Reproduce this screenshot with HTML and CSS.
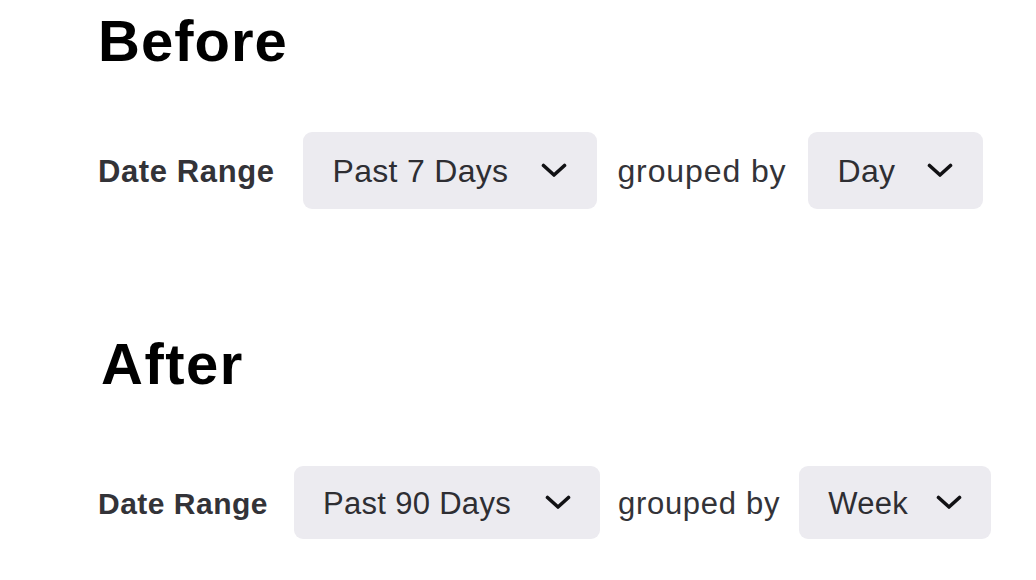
FILE: index.html
```html
<!DOCTYPE html>
<html lang="en">
<head>
<meta charset="utf-8">
<title>Before / After</title>
<link rel="stylesheet" href="styles.css">
</head>
<body>
<main class="page">
  <section class="block before">
    <h1 class="title">Before</h1>
    <div class="filters">
      <span class="label">Date Range</span>
      <button class="select select-range">
        <span class="value">Past 7 Days</span>
        <svg class="chev" viewBox="0 0 26 15" aria-hidden="true"><path d="M2.5 2.5 L13 12 L23.5 2.5" fill="none" stroke="currentColor" stroke-width="3.6" stroke-linecap="round" stroke-linejoin="round"/></svg>
      </button>
      <span class="plain">grouped by</span>
      <button class="select select-group">
        <span class="value">Day</span>
        <svg class="chev" viewBox="0 0 26 15" aria-hidden="true"><path d="M2.5 2.5 L13 12 L23.5 2.5" fill="none" stroke="currentColor" stroke-width="3.6" stroke-linecap="round" stroke-linejoin="round"/></svg>
      </button>
    </div>
  </section>
  <section class="block after">
    <h1 class="title">After</h1>
    <div class="filters compact">
      <span class="label">Date Range</span>
      <button class="select select-range">
        <span class="value">Past 90 Days</span>
        <svg class="chev" viewBox="0 0 26 15" aria-hidden="true"><path d="M2.5 2.5 L13 12 L23.5 2.5" fill="none" stroke="currentColor" stroke-width="3.6" stroke-linecap="round" stroke-linejoin="round"/></svg>
      </button>
      <span class="plain">grouped by</span>
      <button class="select select-group">
        <span class="value">Week</span>
        <svg class="chev" viewBox="0 0 26 15" aria-hidden="true"><path d="M2.5 2.5 L13 12 L23.5 2.5" fill="none" stroke="currentColor" stroke-width="3.6" stroke-linecap="round" stroke-linejoin="round"/></svg>
      </button>
    </div>
  </section>
</main>
</body>
</html>
```

FILE: styles.css
```css
* {
  box-sizing: border-box;
}

html, body {
  margin: 0;
  padding: 0;
  background: #ffffff;
}

body {
  font-family: "Liberation Sans", Arial, sans-serif;
  color: #2e2e33;
}

.page {
  padding: 12px 0 0 98px;
}

.title {
  margin: 0;
  font-size: 58px;
  line-height: 58px;
  font-weight: 700;
  color: #000000;
}

.before .title {
  letter-spacing: 1px;
}

.after .title {
  margin-left: 3px;
  letter-spacing: 1.5px;
}

.after {
  margin-top: 126px;
}

.filters {
  display: flex;
  align-items: center;
  margin-top: 62px;
  height: 77px;
}

.label {
  font-size: 31px;
  font-weight: 700;
  letter-spacing: 0.6px;
  color: #333338;
  padding-top: 2px;
  margin-right: 28px;
}

.plain {
  font-size: 32px;
  letter-spacing: 0.9px;
  color: #333338;
  padding-top: 2px;
  margin: 0 21px 0 20px;
}

.select {
  display: flex;
  align-items: center;
  height: 77px;
  padding: 0 30px;
  border: 0;
  border-radius: 9px;
  background: #ecebf0;
  font-family: inherit;
  color: #2e2e33;
  cursor: pointer;
}

.value {
  font-size: 32px;
  letter-spacing: 0.3px;
  padding-top: 2px;
  margin-right: 33px;
}

.chev {
  width: 26px;
  height: 15px;
  color: #111114;
  display: block;
}

.select-group .value {
  margin-right: 32px;
}

/* second row is shown at a slightly smaller scale */
.compact {
  margin-top: 73px;
  height: 73px;
}

.compact .label {
  font-size: 30px;
  letter-spacing: 0.5px;
  margin-right: 26px;
}

.compact .plain {
  font-size: 31px;
  letter-spacing: 0.7px;
  margin: 0 19px 0 18px;
}

.compact .select {
  height: 73px;
  padding: 0 29px;
}

.compact .value {
  font-size: 31px;
  letter-spacing: 0.3px;
  margin-right: 34px;
}

.compact .select-group .value {
  margin-right: 28px;
}
```
